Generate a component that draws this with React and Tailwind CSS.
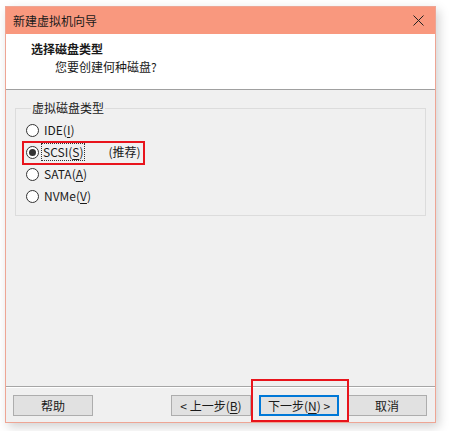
export default function App() {
  const radios = [
    { label: "IDE", key: "I", checked: false },
    { label: "SCSI", key: "S", checked: true, note: "(推荐)" },
    { label: "SATA", key: "A", checked: false },
    { label: "NVMe", key: "V", checked: false },
  ];

  return (
    <div
      className="relative w-[463px] h-[431px] bg-white pl-[5px] pt-[6px] text-[12px] text-[#1a1a1a] leading-[16px]"
      style={{ fontFamily: '"Noto Sans CJK SC", "Noto Sans", sans-serif' }}
    >
      <div className="flex flex-col w-[431px] h-[417px] border border-[#eea594] bg-[#f0f0f0] shadow-[3px_4px_10px_rgba(0,0,0,0.18)]">
        {/* Title bar */}
        <div className="flex items-center justify-between h-[27px] bg-[#f9987e] pl-[7px] pr-[11px] shrink-0">
          <span>新建虚拟机向导</span>
          <svg width="11" height="11" viewBox="0 0 11 11">
            <path d="M0.5 0.5 L10.5 10.5 M10.5 0.5 L0.5 10.5" stroke="#222" strokeWidth="1" />
          </svg>
        </div>

        {/* Header */}
        <div className="h-[56px] bg-white border-b border-[#a0a0a0] pl-[25px] pt-[7px] shrink-0">
          <div className="font-bold">选择磁盘类型</div>
          <div className="mt-[2px] pl-[24px]">您要创建何种磁盘?</div>
        </div>

        {/* Body */}
        <div className="flex-1 px-[9px] pt-[10px]">
          <fieldset className="border border-[#dcdcdc] pl-[10px] pt-[3px] pb-[8px]">
            <legend className="ml-[5px] px-[1px]">虚拟磁盘类型</legend>
            {radios.map((r) => (
              <div key={r.label} className="flex items-center h-[22px]">
                <span className="flex items-center justify-center w-[13px] h-[13px] rounded-full border border-[#333] bg-white">
                  {r.checked && <span className="w-[7px] h-[7px] rounded-full bg-[#333]" />}
                </span>
                <span
                  className={
                    r.checked
                      ? "ml-[2px] px-[1px] border border-dotted border-[#333]"
                      : "ml-[3px] px-[1px] border border-transparent"
                  }
                >
                  {r.label}(<span className="underline underline-offset-2">{r.key}</span>)
                </span>
                {r.note && <span className="ml-[23px]">{r.note}</span>}
              </div>
            ))}
          </fieldset>
        </div>

        {/* Footer */}
        <div className="flex items-center border-t border-[#a6a6a6] shadow-[inset_0_1px_0_#ffffff] pt-[8px] pb-[6px] pl-[7px] pr-[8px] shrink-0">
          <button className="w-[80px] h-[21px] bg-[#e1e1e1] border border-[#adadad]">帮助</button>
          <div className="flex-1" />
          <button className="w-[80px] h-[21px] bg-[#e1e1e1] border border-[#adadad]">
            &lt; 上一步(<span className="underline underline-offset-2">B</span>)
          </button>
          <button className="ml-[8px] w-[80px] h-[21px] bg-[#e1e1e1] border-2 border-[#0078d7]">
            下一步(<span className="underline underline-offset-2">N</span>) &gt;
          </button>
          <button className="ml-[8px] w-[80px] h-[21px] bg-[#e1e1e1] border border-[#adadad]">取消</button>
        </div>
      </div>

      {/* Annotation boxes */}
      <div className="absolute left-[22px] top-[141px] w-[123px] h-[24px] border-2 border-[#e8141c]" />
      <div className="absolute left-[251px] top-[379px] w-[98px] h-[43px] border-2 border-[#e8141c]" />
    </div>
  );
}
